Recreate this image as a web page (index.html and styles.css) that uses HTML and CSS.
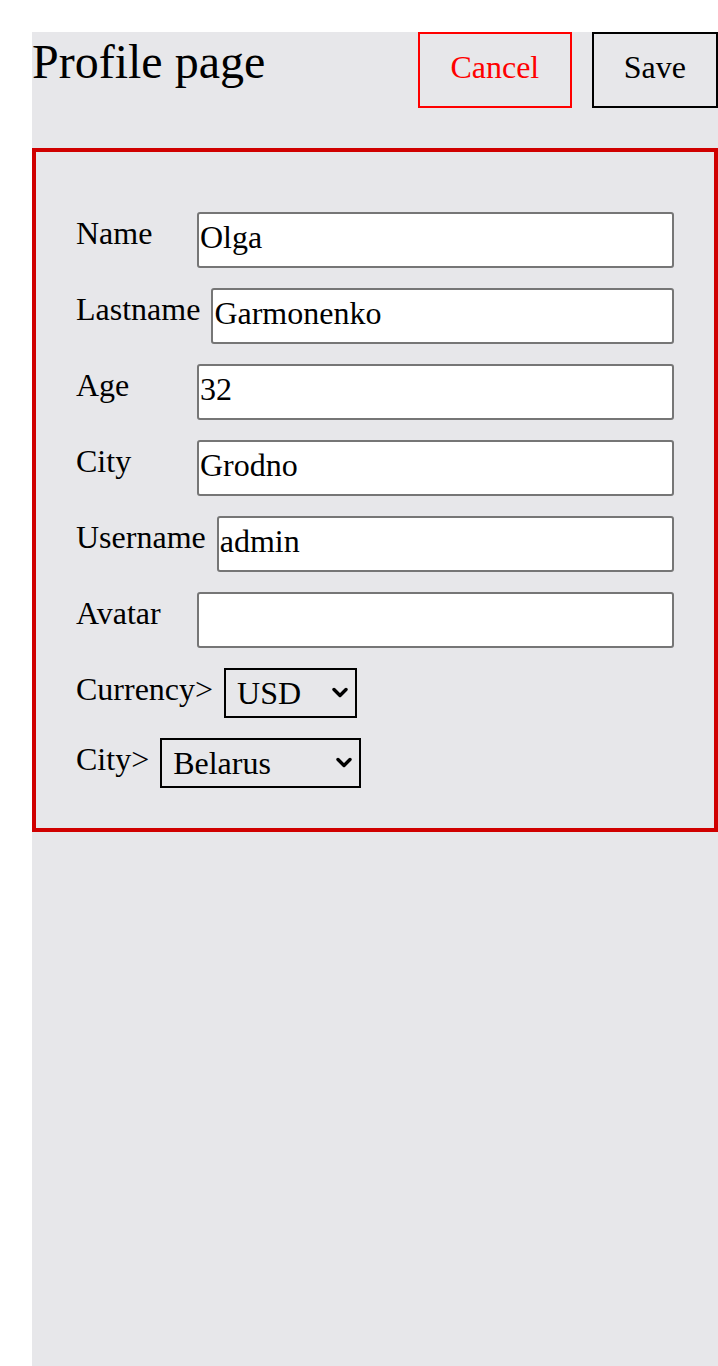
FILE: index.html
```html
<!DOCTYPE html>
<html lang="en">
<head>
<meta charset="utf-8">
<title>Profile page</title>
<link rel="stylesheet" href="styles.css">
</head>
<body>
<div class="page">
  <header class="header">
    <h1 class="title">Profile page</h1>
    <div class="actions">
      <button class="btn btn-cancel">Cancel</button>
      <button class="btn btn-save">Save</button>
    </div>
  </header>
  <form class="card">
    <div class="row"><label class="label">Name</label><input class="field" type="text" value="Olga"></div>
    <div class="row"><label class="label">Lastname</label><input class="field" type="text" value="Garmonenko"></div>
    <div class="row"><label class="label">Age</label><input class="field" type="text" value="32"></div>
    <div class="row"><label class="label">City</label><input class="field" type="text" value="Grodno"></div>
    <div class="row"><label class="label">Username</label><input class="field" type="text" value="admin"></div>
    <div class="row"><label class="label">Avatar</label><input class="field" type="text" value=""></div>
    <div class="row"><label class="label label-inline">Currency&gt;</label>
      <div class="select-wrap select-currency">
        <select class="select">
          <option>USD</option>
          <option>EUR</option>
          <option>RUB</option>
        </select>
        <svg class="chevron" width="16" height="11" viewBox="0 0 16 11" aria-hidden="true"><path d="M2 2.5 L8 8.5 L14 2.5" fill="none" stroke="#000" stroke-width="3.4" stroke-linecap="round" stroke-linejoin="round"/></svg>
      </div>
    </div>
    <div class="row"><label class="label label-inline">City&gt;</label>
      <div class="select-wrap select-country">
        <select class="select">
          <option>Belarus</option>
          <option>Russia</option>
          <option>Ukraine</option>
        </select>
        <svg class="chevron" width="16" height="11" viewBox="0 0 16 11" aria-hidden="true"><path d="M2 2.5 L8 8.5 L14 2.5" fill="none" stroke="#000" stroke-width="3.4" stroke-linecap="round" stroke-linejoin="round"/></svg>
      </div>
    </div>
  </form>
</div>
</body>
</html>
```
FILE: styles.css
```css
html, body {
  margin: 0;
  padding: 0;
  background: #ffffff;
}

body {
  font-family: "Liberation Serif", "Times New Roman", serif;
  color: #000;
}

.page {
  margin: 32px 0 0 32px;
  min-height: calc(100vh - 32px);
  background: #e7e7ea;
}

.header {
  display: flex;
  justify-content: space-between;
  align-items: flex-start;
  height: 76px;
}

.title {
  margin: 0;
  padding-top: 2px;
  font-size: 48px;
  font-weight: normal;
  line-height: normal;
}

.actions {
  display: flex;
  gap: 20px;
}

.btn {
  box-sizing: border-box;
  height: 76px;
  padding: 15px 30px 21px;
  font-family: "Liberation Serif", "Times New Roman", serif;
  font-size: 32px;
  line-height: 36px;
  background: transparent;
  border: 2px solid #000;
  border-radius: 0;
  color: #000;
}

.btn-cancel {
  width: 154px;
  padding-left: 0;
  padding-right: 0;
  color: #ff0000;
  border-color: #ff0000;
}

.card {
  margin: 40px 0 0;
  padding: 60px 40px 40px;
  border: 4px solid #d00000;
  display: flex;
  flex-direction: column;
  gap: 20px;
}

.row {
  display: flex;
  align-items: flex-start;
  gap: 11px;
}

.label {
  min-width: 110px;
  padding-top: 3px;
  font-size: 32px;
  line-height: normal;
}

.label-inline {
  min-width: 0;
}

.field {
  flex: 1;
  min-width: 0;
  box-sizing: border-box;
  height: 56px;
  margin: 0;
  padding: 0 1px 6px;
  font-family: "Liberation Serif", "Times New Roman", serif;
  font-size: 32px;
  color: #000;
  background: #fff;
  border: 2px solid #767676;
  border-radius: 3px;
}

.select-wrap {
  position: relative;
  height: 50px;
}

.select-currency {
  width: 133px;
}

.select-country {
  width: 201px;
}

.select {
  -webkit-appearance: none;
  appearance: none;
  box-sizing: border-box;
  width: 100%;
  height: 50px;
  margin: 0;
  padding: 0 30px 0 11px;
  font-family: "Liberation Serif", "Times New Roman", serif;
  font-size: 32px;
  color: #000;
  background-color: transparent;
  border: 2px solid #000;
  border-radius: 0;
}

.chevron {
  position: absolute;
  right: 9px;
  top: 19px;
  pointer-events: none;
}
```
